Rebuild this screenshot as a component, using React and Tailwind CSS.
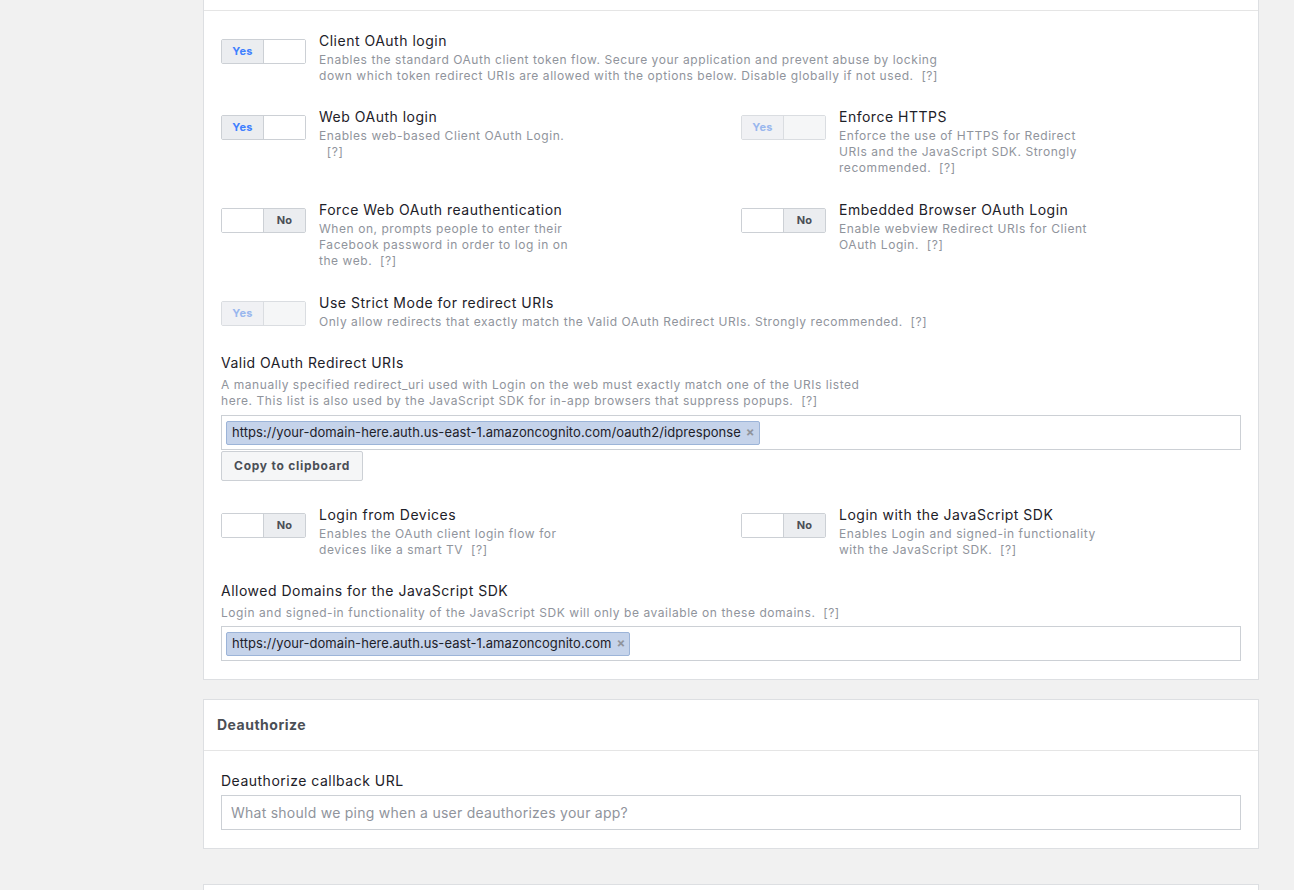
import React from "react";

const Toggle = ({ on, disabled }) => {
    if (on) {
        return (
            <div
                className={`mt-[7px] flex h-[25px] w-[85px] shrink-0 rounded-[2px] border ${
                    disabled ? "border-[#dadde1]" : "border-[#ccd0d5]"
                }`}
            >
                <div
                    className={`flex w-[42px] items-center justify-center border-r text-[11px] font-bold tracking-[0.3px] ${
                        disabled
                            ? "border-[#dadde1] bg-[#f0f1f4] text-[#99b7ee]"
                            : "border-[#ccd0d5] bg-[#ebedf0] text-[#4080ff]"
                    }`}
                >
                    Yes
                </div>
                <div className={`flex-1 ${disabled ? "bg-[#f5f6f7]" : "bg-white"}`} />
            </div>
        );
    }
    return (
        <div className="mt-[7px] flex h-[25px] w-[85px] shrink-0 rounded-[2px] border border-[#ccd0d5]">
            <div className="w-[42px] border-r border-[#ccd0d5] bg-white" />
            <div className="flex flex-1 items-center justify-center bg-[#ebedf0] text-[11px] font-bold tracking-[0.3px] text-[#4b4f56]">
                No
            </div>
        </div>
    );
};

const Setting = ({ on, disabled, title, lines, className = "" }) => (
    <div className={`flex items-start ${className}`}>
        <Toggle on={on} disabled={disabled} />
        <div className="ml-[13px]">
            <div className="text-[14px] leading-[18px] tracking-[0.5px] text-[#1d2129]">{title}</div>
            <div className="mt-[2px] text-[12px] leading-[16px] tracking-[0.55px] text-[#90949c]">
                {lines.map((l, i) => (
                    <div key={i} className="whitespace-pre">
                        {l}
                    </div>
                ))}
            </div>
        </div>
    </div>
);

const Chip = ({ children }) => (
    <div className="flex h-[24px] items-center rounded-[2px] border border-[#9cb4d8] bg-[#c5d3ea] pl-[5px] pr-[4px] text-[13px] tracking-[0.06px] text-[#1d2129]">
        {children}
        <span className="ml-[5px] text-[13px] font-bold text-[#90949c]">×</span>
    </div>
);

export default function App() {
    return (
        <div className="min-h-screen overflow-hidden bg-[#f1f1f1] font-['Inter',sans-serif]">
            <div className="ml-[203px] w-[1056px]">
                <div className="border-x border-b border-[#dddfe2] bg-white">
                    <div className="h-[11px] border-b border-[#e5e5e5]" />
                    <div className="px-[17px] pt-[21px] pb-[18px]">
                        <Setting
                            on
                            title="Client OAuth login"
                            lines={[
                                "Enables the standard OAuth client token flow. Secure your application and prevent abuse by locking",
                                "down which token redirect URIs are allowed with the options below. Disable globally if not used.  [?]",
                            ]}
                        />

                        <div className="mt-[24px] grid grid-cols-[520px_1fr] gap-y-[25px]">
                            <Setting
                                on
                                title="Web OAuth login"
                                lines={["Enables web-based Client OAuth Login.", "  [?]"]}
                            />
                            <Setting
                                on
                                disabled
                                title="Enforce HTTPS"
                                lines={[
                                    "Enforce the use of HTTPS for Redirect",
                                    "URIs and the JavaScript SDK. Strongly",
                                    "recommended.  [?]",
                                ]}
                            />
                            <Setting
                                title="Force Web OAuth reauthentication"
                                lines={[
                                    "When on, prompts people to enter their",
                                    "Facebook password in order to log in on",
                                    "the web.  [?]",
                                ]}
                            />
                            <Setting
                                title="Embedded Browser OAuth Login"
                                lines={["Enable webview Redirect URIs for Client", "OAuth Login.  [?]"]}
                            />
                        </div>

                        <Setting
                            className="mt-[25px]"
                            on
                            disabled
                            title="Use Strict Mode for redirect URIs"
                            lines={[
                                "Only allow redirects that exactly match the Valid OAuth Redirect URIs. Strongly recommended.  [?]",
                            ]}
                        />

                        <div className="mt-[24px]">
                            <div className="text-[14px] leading-[18px] tracking-[0.5px] text-[#1d2129]">
                                Valid OAuth Redirect URIs
                            </div>
                            <div className="mt-[5px] text-[12px] leading-[16px] tracking-[0.55px] text-[#90949c]">
                                <div className="whitespace-pre">
                                    A manually specified redirect_uri used with Login on the web must exactly match one of the URIs listed
                                </div>
                                <div className="whitespace-pre">
                                    here. This list is also used by the JavaScript SDK for in-app browsers that suppress popups.  [?]
                                </div>
                            </div>
                            <div className="mt-[6px] flex h-[35px] items-center border border-[#ccd0d5] bg-white px-[4px]">
                                <Chip>https://your-domain-here.auth.us-east-1.amazoncognito.com/oauth2/idpresponse</Chip>
                            </div>
                            <button className="mt-[1px] h-[30px] rounded-[2px] border border-[#ccd0d5] bg-[#f5f6f7] px-[12px] text-[12px] font-bold tracking-[0.75px] text-[#4b4f56]">
                                Copy to clipboard
                            </button>
                        </div>

                        <div className="mt-[25px] grid grid-cols-[520px_1fr]">
                            <Setting
                                title="Login from Devices"
                                lines={["Enables the OAuth client login flow for", "devices like a smart TV  [?]"]}
                            />
                            <Setting
                                title="Login with the JavaScript SDK"
                                lines={["Enables Login and signed-in functionality", "with the JavaScript SDK.  [?]"]}
                            />
                        </div>

                        <div className="mt-[24px]">
                            <div className="text-[14px] leading-[18px] tracking-[0.5px] text-[#1d2129]">
                                Allowed Domains for the JavaScript SDK
                            </div>
                            <div className="mt-[5px] whitespace-pre text-[12px] leading-[16px] tracking-[0.55px] text-[#90949c]">
                                Login and signed-in functionality of the JavaScript SDK will only be available on these domains.  [?]
                            </div>
                            <div className="mt-[5px] flex h-[35px] items-center border border-[#ccd0d5] bg-white px-[4px]">
                                <Chip>https://your-domain-here.auth.us-east-1.amazoncognito.com</Chip>
                            </div>
                        </div>
                    </div>
                </div>

                <div className="mt-[19px] border border-[#dddfe2] bg-white">
                    <div className="border-b border-[#e5e5e5] px-[13px] py-[16px] text-[14px] font-bold leading-[18px] tracking-[0.5px] text-[#4b4f56]">
                        Deauthorize
                    </div>
                    <div className="px-[17px] pt-[21px] pb-[18px]">
                        <div className="text-[14px] leading-[18px] tracking-[0.5px] text-[#1d2129]">
                            Deauthorize callback URL
                        </div>
                        <input
                            className="mt-[5px] h-[35px] w-full border border-[#ccd0d5] px-[9px] text-[14px] tracking-[0.25px] text-[#1d2129] outline-none placeholder:text-[#90949c]"
                            placeholder="What should we ping when a user deauthorizes your app?"
                        />
                    </div>
                </div>

                <div className="mt-[35px] h-[40px] border border-[#dddfe2] bg-white" />
            </div>
        </div>
    );
}
